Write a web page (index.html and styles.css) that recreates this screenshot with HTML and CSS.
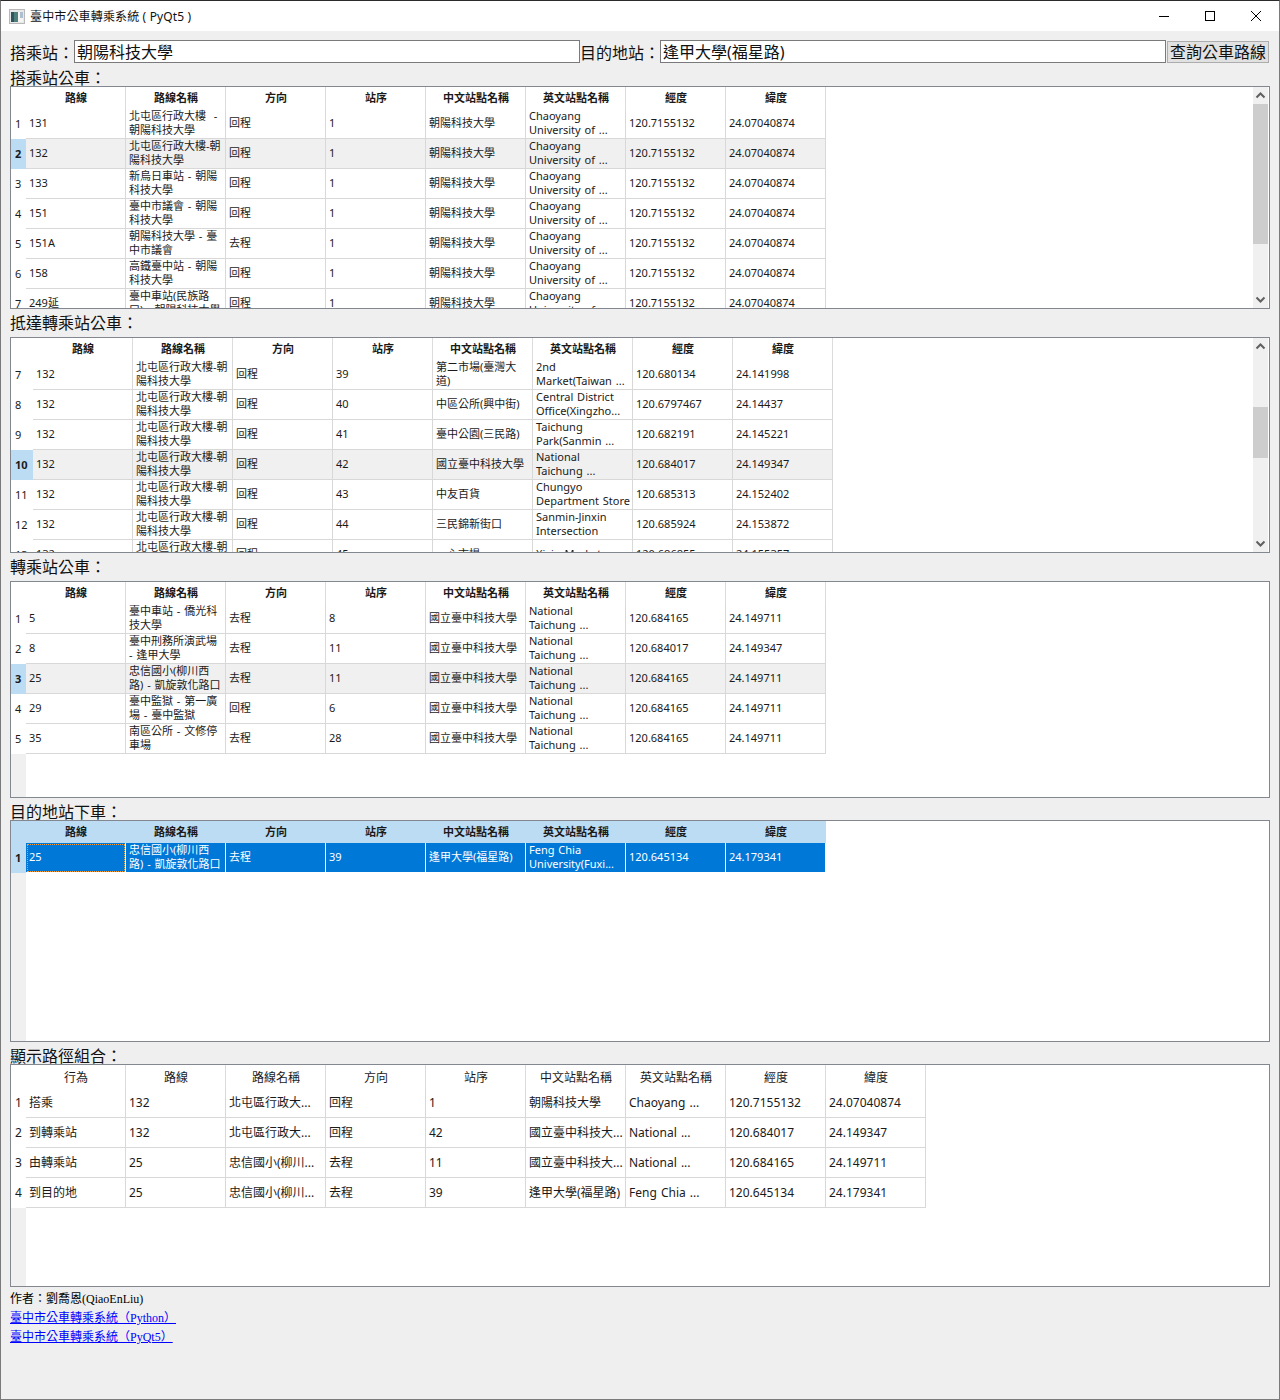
FILE: index.html
```html
<!DOCTYPE html>
<html lang="zh-Hant">
<head>
<meta charset="UTF-8">
<meta name="viewport" content="width=device-width, initial-scale=1.0">
<title>臺中市公車轉乘系統 ( PyQt5 )</title>
<link rel="stylesheet" href="styles.css">
</head>
<body>
<div class="window">
    <!-- 標題列 -->
    <div class="titlebar">
        <svg class="app-icon" width="16" height="15" viewBox="0 0 16 15">
            <rect x="0.5" y="0.5" width="15" height="14" fill="#e8e8e8" stroke="#b8b8b8"/>
            <rect x="2" y="3" width="7" height="10" fill="#4f7f7a"/>
            <rect x="2" y="3" width="3" height="10" fill="#2f5560"/>
            <rect x="9" y="3" width="5" height="10" fill="#f4f4f4"/>
            <rect x="11" y="3" width="3" height="6" fill="#aebfd0"/>
        </svg>
        <span class="title-text">臺中市公車轉乘系統 ( PyQt5 )</span>
        <div class="controls">
            <svg class="control" width="46" height="30" viewBox="0 0 46 30"><path d="M18 15.5h10" stroke="#000" fill="none"/></svg>
            <svg class="control" width="46" height="30" viewBox="0 0 46 30"><rect x="18.5" y="10.5" width="9" height="9" stroke="#000" fill="none"/></svg>
            <svg class="control" width="46" height="30" viewBox="0 0 46 30"><path d="M18 10l10 10M28 10l-10 10" stroke="#000" fill="none"/></svg>
        </div>
    </div>

    <div class="content">
        <!-- 查詢列 -->
        <div class="search-row">
            <label class="big-label">搭乘站：</label>
            <div class="line-edit">朝陽科技大學</div>
            <label class="big-label">目的地站：</label>
            <div class="line-edit">逢甲大學(福星路)</div>
            <button class="query-btn">查詢公車路線</button>
        </div>

        <!-- 搭乘站公車 -->
        <div class="section-title title-first">搭乘站公車：</div>
        <div class="table-view view-pickup">
            <div class="table-wrap">
                <table>
                    <thead>
                        <tr><th class="corner"></th><th>路線</th><th>路線名稱</th><th>方向</th><th>站序</th><th>中文站點名稱</th><th>英文站點名稱</th><th>經度</th><th>緯度</th></tr>
                    </thead>
                    <tbody>
                        <tr><th>1</th><td>131</td><td>北屯區行政大樓 &nbsp;-<br>朝陽科技大學</td><td>回程</td><td>1</td><td>朝陽科技大學</td><td>Chaoyang<br>University of ...</td><td>120.7155132</td><td>24.07040874</td></tr>
                        <tr class="current"><th>2</th><td>132</td><td>北屯區行政大樓-朝<br>陽科技大學</td><td>回程</td><td>1</td><td>朝陽科技大學</td><td>Chaoyang<br>University of ...</td><td>120.7155132</td><td>24.07040874</td></tr>
                        <tr><th>3</th><td>133</td><td>新烏日車站 - 朝陽<br>科技大學</td><td>回程</td><td>1</td><td>朝陽科技大學</td><td>Chaoyang<br>University of ...</td><td>120.7155132</td><td>24.07040874</td></tr>
                        <tr><th>4</th><td>151</td><td>臺中市議會 - 朝陽<br>科技大學</td><td>回程</td><td>1</td><td>朝陽科技大學</td><td>Chaoyang<br>University of ...</td><td>120.7155132</td><td>24.07040874</td></tr>
                        <tr><th>5</th><td>151A</td><td>朝陽科技大學 - 臺<br>中市議會</td><td>去程</td><td>1</td><td>朝陽科技大學</td><td>Chaoyang<br>University of ...</td><td>120.7155132</td><td>24.07040874</td></tr>
                        <tr><th>6</th><td>158</td><td>高鐵臺中站 - 朝陽<br>科技大學</td><td>回程</td><td>1</td><td>朝陽科技大學</td><td>Chaoyang<br>University of ...</td><td>120.7155132</td><td>24.07040874</td></tr>
                        <tr><th>7</th><td>249延</td><td>臺中車站(民族路<br>口) - 朝陽科技大學</td><td>回程</td><td>1</td><td>朝陽科技大學</td><td>Chaoyang<br>University of ...</td><td>120.7155132</td><td>24.07040874</td></tr>
                    </tbody>
                </table>
            </div>
            <div class="scrollbar">
                <svg class="arrow" width="15" height="17" viewBox="0 0 15 17"><path d="M3.5 10.5l4-4 4 4" stroke="#606060" stroke-width="2" fill="none"/></svg>
                <div class="track"><div class="thumb thumb-pickup"></div></div>
                <svg class="arrow" width="15" height="17" viewBox="0 0 15 17"><path d="M3.5 6.5l4 4 4-4" stroke="#606060" stroke-width="2" fill="none"/></svg>
            </div>
        </div>

        <!-- 抵達轉乘站公車 -->
        <div class="section-title title-tall">抵達轉乘站公車：</div>
        <div class="table-view view-arrive wide-gutter">
            <div class="table-wrap">
                <table>
                    <thead>
                        <tr><th class="corner"></th><th>路線</th><th>路線名稱</th><th>方向</th><th>站序</th><th>中文站點名稱</th><th>英文站點名稱</th><th>經度</th><th>緯度</th></tr>
                    </thead>
                    <tbody>
                        <tr><th>7</th><td>132</td><td>北屯區行政大樓-朝<br>陽科技大學</td><td>回程</td><td>39</td><td>第二市場(臺灣大<br>道)</td><td>2nd<br>Market(Taiwan ...</td><td>120.680134</td><td>24.141998</td></tr>
                        <tr><th>8</th><td>132</td><td>北屯區行政大樓-朝<br>陽科技大學</td><td>回程</td><td>40</td><td>中區公所(興中街)</td><td>Central District<br>Office(Xingzho...</td><td>120.6797467</td><td>24.14437</td></tr>
                        <tr><th>9</th><td>132</td><td>北屯區行政大樓-朝<br>陽科技大學</td><td>回程</td><td>41</td><td>臺中公園(三民路)</td><td>Taichung<br>Park(Sanmin ...</td><td>120.682191</td><td>24.145221</td></tr>
                        <tr class="current"><th>10</th><td>132</td><td>北屯區行政大樓-朝<br>陽科技大學</td><td>回程</td><td>42</td><td>國立臺中科技大學</td><td>National<br>Taichung ...</td><td>120.684017</td><td>24.149347</td></tr>
                        <tr><th>11</th><td>132</td><td>北屯區行政大樓-朝<br>陽科技大學</td><td>回程</td><td>43</td><td>中友百貨</td><td>Chungyo<br>Department Store</td><td>120.685313</td><td>24.152402</td></tr>
                        <tr><th>12</th><td>132</td><td>北屯區行政大樓-朝<br>陽科技大學</td><td>回程</td><td>44</td><td>三民錦新街口</td><td>Sanmin-Jinxin<br>Intersection</td><td>120.685924</td><td>24.153872</td></tr>
                        <tr><th>13</th><td>132</td><td>北屯區行政大樓-朝<br>陽科技大學</td><td>回程</td><td>45</td><td>一心市場</td><td>Xixin Market</td><td>120.686855</td><td>24.155357</td></tr>
                    </tbody>
                </table>
            </div>
            <div class="scrollbar">
                <svg class="arrow" width="15" height="17" viewBox="0 0 15 17"><path d="M3.5 10.5l4-4 4 4" stroke="#606060" stroke-width="2" fill="none"/></svg>
                <div class="track"><div class="thumb thumb-arrive"></div></div>
                <svg class="arrow" width="15" height="17" viewBox="0 0 15 17"><path d="M3.5 6.5l4 4 4-4" stroke="#606060" stroke-width="2" fill="none"/></svg>
            </div>
        </div>

        <!-- 轉乘站公車 -->
        <div class="section-title title-tall">轉乘站公車：</div>
        <div class="table-view view-transfer">
            <div class="table-wrap">
                <table>
                    <thead>
                        <tr><th class="corner"></th><th>路線</th><th>路線名稱</th><th>方向</th><th>站序</th><th>中文站點名稱</th><th>英文站點名稱</th><th>經度</th><th>緯度</th></tr>
                    </thead>
                    <tbody>
                        <tr><th>1</th><td>5</td><td>臺中車站 - 僑光科<br>技大學</td><td>去程</td><td>8</td><td>國立臺中科技大學</td><td>National<br>Taichung ...</td><td>120.684165</td><td>24.149711</td></tr>
                        <tr><th>2</th><td>8</td><td>臺中刑務所演武場<br>- 逢甲大學</td><td>去程</td><td>11</td><td>國立臺中科技大學</td><td>National<br>Taichung ...</td><td>120.684017</td><td>24.149347</td></tr>
                        <tr class="current"><th>3</th><td>25</td><td>忠信國小(柳川西<br>路) - 凱旋敦化路口</td><td>去程</td><td>11</td><td>國立臺中科技大學</td><td>National<br>Taichung ...</td><td>120.684165</td><td>24.149711</td></tr>
                        <tr><th>4</th><td>29</td><td>臺中監獄 - 第一廣<br>場 - 臺中監獄</td><td>回程</td><td>6</td><td>國立臺中科技大學</td><td>National<br>Taichung ...</td><td>120.684165</td><td>24.149711</td></tr>
                        <tr><th>5</th><td>35</td><td>南區公所 - 文修停<br>車場</td><td>去程</td><td>28</td><td>國立臺中科技大學</td><td>National<br>Taichung ...</td><td>120.684165</td><td>24.149711</td></tr>
                    </tbody>
                </table>
            </div>
        </div>

        <!-- 目的地站下車 -->
        <div class="section-title title-short">目的地站下車：</div>
        <div class="table-view view-dest">
            <div class="table-wrap">
                <table>
                    <thead class="active-head">
                        <tr><th class="corner"></th><th>路線</th><th>路線名稱</th><th>方向</th><th>站序</th><th>中文站點名稱</th><th>英文站點名稱</th><th>經度</th><th>緯度</th></tr>
                    </thead>
                    <tbody>
                        <tr class="selected"><th>1</th><td class="focus">25</td><td>忠信國小(柳川西<br>路) - 凱旋敦化路口</td><td>去程</td><td>39</td><td>逢甲大學(福星路)</td><td>Feng Chia<br>University(Fuxi...</td><td>120.645134</td><td>24.179341</td></tr>
                    </tbody>
                </table>
            </div>
        </div>

        <!-- 顯示路徑組合 -->
        <div class="section-title title-short">顯示路徑組合：</div>
        <div class="table-view view-path">
            <div class="table-wrap">
                <table class="path-table">
                    <thead>
                        <tr><th class="corner"></th><th>行為</th><th>路線</th><th>路線名稱</th><th>方向</th><th>站序</th><th>中文站點名稱</th><th>英文站點名稱</th><th>經度</th><th>緯度</th></tr>
                    </thead>
                    <tbody>
                        <tr><th>1</th><td>搭乘</td><td>132</td><td>北屯區行政大...</td><td>回程</td><td>1</td><td>朝陽科技大學</td><td>Chaoyang ...</td><td>120.7155132</td><td>24.07040874</td></tr>
                        <tr><th>2</th><td>到轉乘站</td><td>132</td><td>北屯區行政大...</td><td>回程</td><td>42</td><td>國立臺中科技大...</td><td>National ...</td><td>120.684017</td><td>24.149347</td></tr>
                        <tr><th>3</th><td>由轉乘站</td><td>25</td><td>忠信國小(柳川...</td><td>去程</td><td>11</td><td>國立臺中科技大...</td><td>National ...</td><td>120.684165</td><td>24.149711</td></tr>
                        <tr><th>4</th><td>到目的地</td><td>25</td><td>忠信國小(柳川...</td><td>去程</td><td>39</td><td>逢甲大學(福星路)</td><td>Feng Chia ...</td><td>120.645134</td><td>24.179341</td></tr>
                    </tbody>
                </table>
            </div>
        </div>

        <!-- 作者與連結 -->
        <div class="footer">
            <div>作者：劉喬恩(QiaoEnLiu)</div>
            <div><a href="#">臺中市公車轉乘系統（Python）</a></div>
            <div><a href="#">臺中市公車轉乘系統（PyQt5）</a></div>
        </div>
    </div>
</div>
</body>
</html>
```

FILE: styles.css
```css
* {
    box-sizing: border-box;
}
body {
    margin: 0;
    padding: 0;
    font-family: "Noto Sans", "Noto Sans CJK TC", sans-serif;
}
.window {
    width: 1280px;
    height: 1400px;
    background-color: #efefef;
    border: 1px solid #7a7a7a;
    border-top-color: #2b2b2b;
    overflow: hidden;
}
.titlebar {
    display: flex;
    align-items: center;
    height: 30px;
    padding-left: 8px;
    background-color: #fff;
}
.title-text {
    margin-left: 5px;
    font-size: 12px;
    letter-spacing: 0.15px;
    color: #111;
}
.controls {
    display: flex;
    margin-left: auto;
}
.control {
    display: block;
}
.content {
    padding: 9px 9px 0;
}
.search-row {
    display: flex;
    align-items: center;
    height: 23px;
}
.big-label,
.line-edit,
.query-btn,
.section-title {
    font-family: "Noto Sans", "Noto Sans CJK TC", sans-serif;
    font-size: 16px;
    color: #111;
    white-space: nowrap;
}
.big-label:first-child {
    width: 64px;
}
.big-label:nth-child(3) {
    width: 80px;
}
.line-edit {
    width: 506px;
    height: 23px;
    padding-left: 2px;
    line-height: 22px;
    background-color: #fff;
    border: 1px solid #7a7a7a;
}
.query-btn {
    width: 102px;
    height: 22px;
    margin-left: 1px;
    padding: 0;
    line-height: 18px;
    background-color: #e1e1e1;
    border: 1px solid #adadad;
}
.section-title {
    display: flex;
    align-items: center;
}
.title-first {
    height: 23px;
    padding-top: 5px;
}
.title-tall {
    height: 28px;
    padding-bottom: 2px;
}
.title-short {
    height: 22px;
    padding-top: 6px;
    line-height: 16px;
}
.table-view {
    display: flex;
    width: 1260px;
    border: 1px solid #828790;
    background-color: #fff;
    background-image: linear-gradient(to right, #f0f0f0 15px, #fff 15px);
    overflow: hidden;
}
.wide-gutter {
    background-image: linear-gradient(to right, #f0f0f0 22px, #fff 22px);
}
.view-pickup {
    height: 223px;
}
.view-arrive {
    height: 216px;
}
.view-transfer {
    height: 217px;
}
.view-dest {
    height: 222px;
}
.view-path {
    height: 223px;
}
.table-wrap {
    flex: 1;
    overflow: hidden;
}
table {
    table-layout: fixed;
    width: 815px;
    border-collapse: separate;
    border-spacing: 0;
    font-size: 11px;
    line-height: 14px;
    word-spacing: 1px;
    color: #1a1a1a;
}
.wide-gutter table {
    width: 822px;
}
.path-table {
    width: 915px;
    font-size: 12px;
}
thead th {
    width: 100px;
    height: 22px;
    padding: 0 0 0 1px;
    font-weight: bold;
    text-align: center;
    background-color: #fff;
    border-right: 1px solid #dcdcdc;
}
.path-table thead th {
    height: 23px;
    padding-top: 2px;
    font-weight: normal;
}
thead th.corner {
    width: 15px;
    border-right: 0;
}
.wide-gutter thead th.corner {
    width: 22px;
}
tbody th {
    padding: 0 0 1px 4px;
    font-weight: normal;
    text-align: left;
    background-color: #fff;
}
td {
    height: 30px;
    padding: 0 3px 1px;
    white-space: nowrap;
    overflow: hidden;
    border-right: 1px solid #d8d8d8;
    border-bottom: 1px solid #d8d8d8;
}
.path-table td {
    padding-bottom: 0;
}
.current td {
    background-color: #f0f0f0;
}
.current th,
.selected th {
    font-weight: bold;
    background-color: #bcdcf4;
}
.active-head th {
    background-color: #bcdcf4;
    border-right-color: #bcdcf4;
}
.selected td {
    color: #fff;
    background-color: #0078d7;
    border-right-color: #fff;
    border-bottom-color: #fff;
}
.selected .focus {
    outline: 1px dotted #f0a040;
    outline-offset: -2px;
}
.scrollbar {
    display: flex;
    flex-direction: column;
    flex: none;
    width: 15px;
    margin-right: 1px;
    background-color: #f0f0f0;
}
.arrow {
    display: block;
    flex: none;
}
.track {
    flex: 1;
}
.thumb {
    background-color: #cdcdcd;
}
.thumb-pickup {
    height: 140px;
}
.thumb-arrive {
    height: 51px;
    margin-top: 52px;
}
.footer {
    padding-top: 3px;
    font-family: "Liberation Serif", "Noto Sans CJK TC", serif;
    font-size: 12px;
    line-height: 19px;
    color: #000;
}
.footer a {
    color: #0000ff;
}
```
